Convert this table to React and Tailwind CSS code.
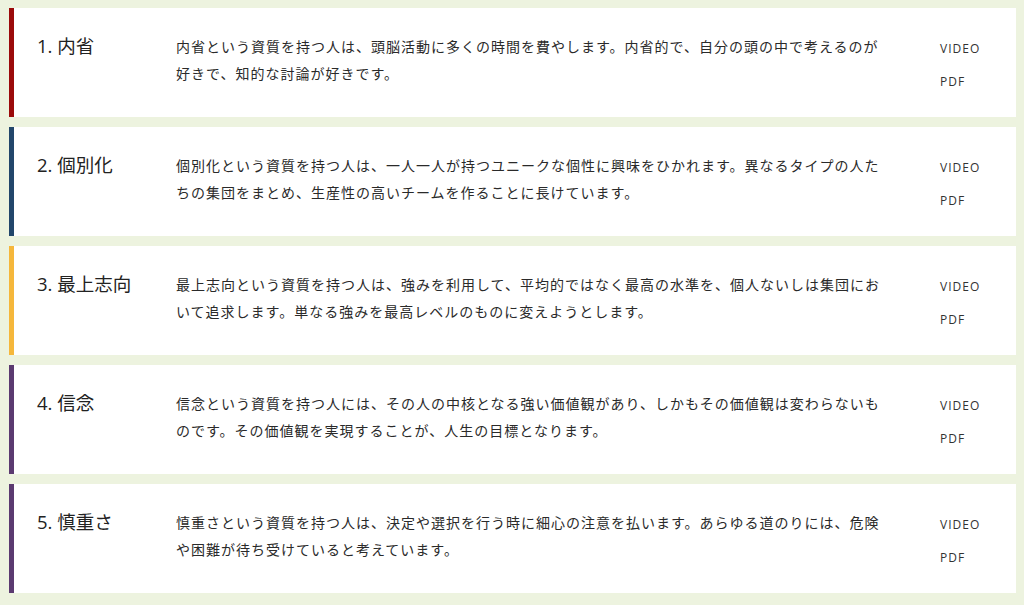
const items = [
  {
    title: "1. 内省",
    color: "border-[#9b0a0a]",
    text: "内省という資質を持つ人は、頭脳活動に多くの時間を費やします。内省的で、自分の頭の中で考えるのが好きで、知的な討論が好きです。",
  },
  {
    title: "2. 個別化",
    color: "border-[#22466b]",
    text: "個別化という資質を持つ人は、一人一人が持つユニークな個性に興味をひかれます。異なるタイプの人たちの集団をまとめ、生産性の高いチームを作ることに長けています。",
  },
  {
    title: "3. 最上志向",
    color: "border-[#f5b73b]",
    text: "最上志向という資質を持つ人は、強みを利用して、平均的ではなく最高の水準を、個人ないしは集団において追求します。単なる強みを最高レベルのものに変えようとします。",
  },
  {
    title: "4. 信念",
    color: "border-[#5b3a70]",
    text: "信念という資質を持つ人には、その人の中核となる強い価値観があり、しかもその価値観は変わらないものです。その価値観を実現することが、人生の目標となります。",
  },
  {
    title: "5. 慎重さ",
    color: "border-[#5b3a70]",
    text: "慎重さという資質を持つ人は、決定や選択を行う時に細心の注意を払います。あらゆる道のりには、危険や困難が待ち受けていると考えています。",
  },
];

const StrengthCard = ({ item }) => {
  return (
    <article className={`flex h-[109px] bg-white border-l-[5px] ${item.color}`}>
      <h2 className="w-[162px] shrink-0 pl-[23px] pt-[26px] text-[18.5px] leading-[24px] text-[#222]">
        {item.title}
      </h2>
      <p className="w-[714px] shrink-0 pt-[25px] text-[14px] leading-[27px] tracking-[1px] text-[#2a2a2a]">
        {item.text}
      </p>
      <div className="flex flex-col pl-[50px] pt-[33px] gap-[17px] text-[12px] leading-[16px] tracking-[1px] text-[#333]">
        <a href="#">VIDEO</a>
        <a href="#">PDF</a>
      </div>
    </article>
  );
};

export default function App() {
  return (
    <div
      className="w-[1024px] h-[605px] overflow-hidden bg-[#edf3df] pl-[9px] pr-[8px] pt-[8px] flex flex-col gap-[10px]"
      style={{ fontFamily: '"Open Sans", "Noto Sans CJK JP", sans-serif' }}
    >
      {items.map((item) => (
        <StrengthCard key={item.title} item={item} />
      ))}
    </div>
  );
}
